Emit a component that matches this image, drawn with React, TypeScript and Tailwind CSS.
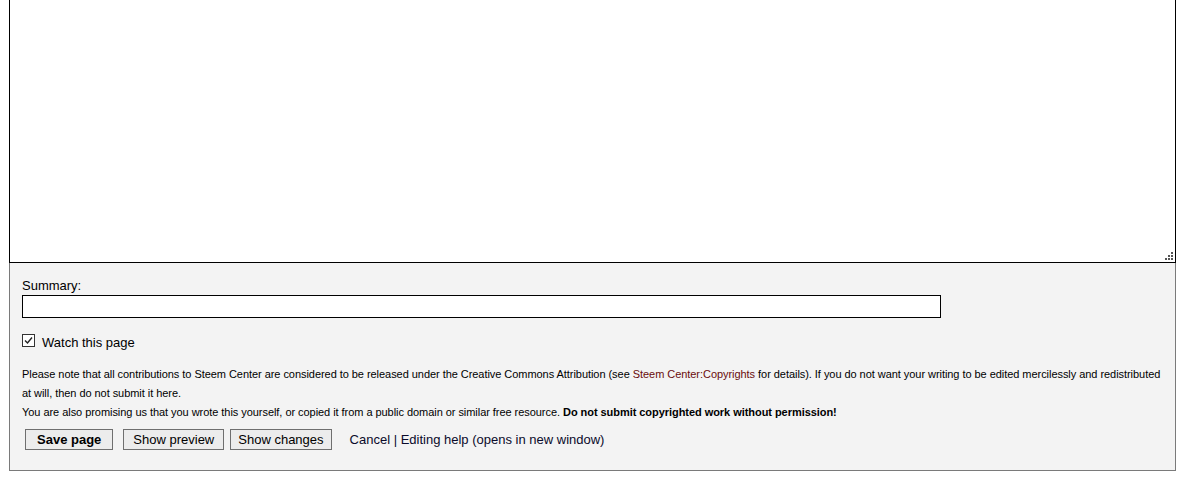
import React, { useState } from 'react';

export default function App() {
  const [watch, setWatch] = useState(true);
  const [summary, setSummary] = useState('');

  return (
    <div className="min-h-[480px] bg-white pl-[9px] pr-[9px] font-['Liberation_Sans',Arial,sans-serif] text-black">
      <div className="relative">
        <textarea
          className="block h-[263px] w-full resize-none border-x border-b border-black bg-white outline-none"
          spellCheck={false}
        />
        {/* resize grip */}
        <svg className="pointer-events-none absolute bottom-[3px] right-[3px]" width="8" height="8" viewBox="0 0 8 8">
          <rect x="6" y="0" width="2" height="2" fill="#555" />
          <rect x="3" y="3" width="2" height="2" fill="#555" />
          <rect x="6" y="3" width="2" height="2" fill="#555" />
          <rect x="0" y="6" width="2" height="2" fill="#555" />
          <rect x="3" y="6" width="2" height="2" fill="#555" />
          <rect x="6" y="6" width="2" height="2" fill="#555" />
        </svg>
      </div>
      <div className="border-x border-b border-[#7a7a7a] bg-[#f3f3f3] px-[12px] pb-[20px] pt-[15px]">
        <label className="block text-[13px] leading-[16px]" htmlFor="summary">
          Summary:
        </label>
        <input
          id="summary"
          className="mt-[1px] block h-[23px] w-[919px] border-[1.5px] border-black bg-white px-1 text-[13px] outline-none"
          value={summary}
          onChange={(e) => setSummary(e.target.value)}
        />
        <label className="mt-[16px] flex cursor-pointer items-start gap-[7px] text-[13px] leading-[14px]">
          <input
            type="checkbox"
            className="sr-only"
            checked={watch}
            onChange={(e) => setWatch(e.target.checked)}
          />
          <span className="flex h-[13px] w-[13px] items-center justify-center border border-[#333] bg-white">
            {watch && (
              <svg width="9" height="9" viewBox="0 0 9 9" fill="none">
                <path d="M1 4.5 L3.5 7 L8 1.5" stroke="#222" strokeWidth="1.4" />
              </svg>
            )}
          </span>
          <span className="mt-[2px]">Watch this page</span>
        </label>
        <div className="mt-[15px] text-[11px] leading-[19px] tracking-[-0.05px]">
          <p>
            Please note that all contributions to Steem Center are considered to be released under the Creative
            Commons Attribution (see{' '}
            <a href="#" className="text-[#6a0c0c]">
              Steem Center:Copyrights
            </a>{' '}
            for details). If you do not want your writing to be edited mercilessly and redistributed at will, then do
            not submit it here.
          </p>
          <p>
            You are also promising us that you wrote this yourself, or copied it from a public domain or similar free
            resource. <b>Do not submit copyrighted work without permission!</b>
          </p>
        </div>
        <div className="mt-[7px] flex items-center text-[13px]">
          <button className="ml-[3px] h-[21px] border border-[#6f6f6f] bg-[#ececec] px-[11px] font-bold">
            Save page
          </button>
          <button className="ml-[10px] h-[21px] border border-[#6f6f6f] bg-[#ececec] px-[9px]">Show preview</button>
          <button className="ml-[6px] h-[21px] border border-[#6f6f6f] bg-[#ececec] px-[7px]">Show changes</button>
          <span className="ml-[18px] text-[#0a0a2a]">
            <a href="#">Cancel</a> | <a href="#">Editing help</a> (opens in new window)
          </span>
        </div>
      </div>
    </div>
  );
}
